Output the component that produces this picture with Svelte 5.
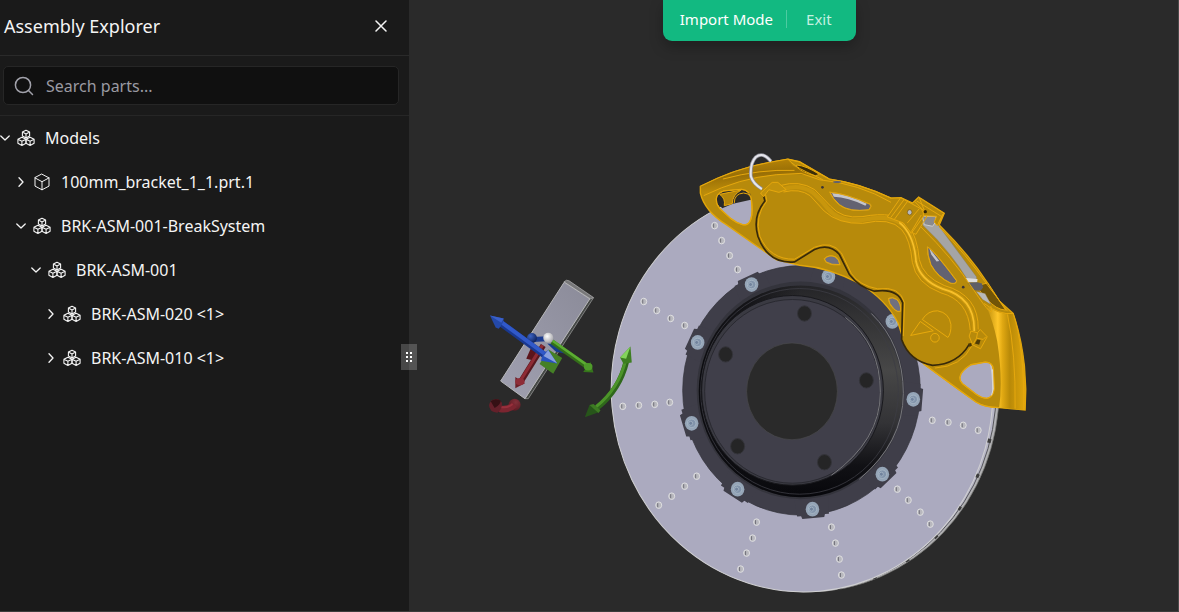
<script>
	const rows = [
		{ level: 0, open: true, icon: 'group', name: 'Models' },
		{ level: 1, open: false, icon: 'part', name: '100mm_bracket_1_1.prt.1' },
		{ level: 1, open: true, icon: 'group', name: 'BRK-ASM-001-BreakSystem' },
		{ level: 2, open: true, icon: 'group', name: 'BRK-ASM-001' },
		{ level: 3, open: false, icon: 'group', name: 'BRK-ASM-020 <1>' },
		{ level: 3, open: false, icon: 'group', name: 'BRK-ASM-010 <1>' },
	];

	const hub = [802, 391];

	const bolts = [
		[752, 285], [829, 277], [893, 322], [914, 400], [883, 475],
		[813, 510], [738, 490], [692, 424], [698, 343],
	];

	const lugs = [[805, 314], [726, 355], [867, 381], [738, 447], [825, 463]];

	const drills = [
		[715, 226], [722, 241], [730, 256], [738, 270],
		[644, 302], [657, 311], [671, 319], [685, 326],
		[623, 407], [639, 406], [655, 405], [670, 403],
		[697, 477], [685, 487], [672, 497], [659, 506],
		[757, 523], [753, 539], [747, 554], [741, 570],
		[832, 528], [836, 544], [840, 560], [842, 576],
		[898, 490], [909, 501], [921, 513], [931, 525],
		[933, 421], [949, 423], [964, 426], [979, 431],
	];

	// angle that turns a lobe so that its top faces away from the hub
	const outward = (x, y) => Math.atan2(y - hub[1], x - hub[0]) * 180 / Math.PI + 90;

	let query = '';
</script>

<div class="app">
	<aside class="explorer">
		<header class="explorer-header">
			<h1>Assembly Explorer</h1>
			<button class="close" aria-label="Close">
				<svg width="12" height="12" viewBox="0 0 12 12"><path d="M1 1l10 10M11 1L1 11" /></svg>
			</button>
		</header>

		<div class="search">
			<label class="search-box">
				<svg width="20" height="20" viewBox="0 0 20 20"><circle cx="9" cy="9" r="7.6" /><path d="M14.5 14.5l4 4" /></svg>
				<input type="text" placeholder="Search parts..." aria-label="Search parts" bind:value={query} />
			</label>
		</div>

		<ul class="tree">
			{#each rows as row}
				<li class="row level-{row.level}">
					<button class="toggle" aria-label="Toggle {row.name}" aria-expanded={row.open}>
						<svg width="10" height="10" viewBox="0 0 10 10">
							<path d={row.open ? 'M.8 3l4.2 4 4.2-4' : 'M3 .8l4 4.2-4 4.2'} />
						</svg>
					</button>
					{#if row.icon === 'part'}
						<svg class="icon" width="18" height="18" viewBox="0 0 18 18">
							<path d="M9 1.2l7 3.7v8.2l-7 3.7-7-3.7V4.9zM2 4.9l7 3.8 7-3.8M9 8.7v8.1" />
						</svg>
					{:else}
						<svg class="icon group" width="18" height="18" viewBox="0 0 18 18">
							<path d="M9 1.2l3.6 1.9v3.9L9 9 5.4 7V3.1zM5.4 3.1L9 5l3.6-1.9M9 5v4" />
							<path d="M4.9 8.3L9 10.3v4l-4.100 2.200-4-2.200v-4zM.9 10.3l4 2 4.100-2M4.9 12.3v4.200" />
							<path d="M13.1 8.3l4 2v4l-4 2.200L9 14.3v-4zM9 10.3l4.100 2 4-2M13.1 12.3v4.200" />
						</svg>
					{/if}
					<span>{row.name}</span>
				</li>
			{/each}
		</ul>

		<button class="resizer" aria-label="Resize panel">
			<svg width="8" height="12" viewBox="0 0 8 12">
				<path d="M1 1h2v2H1zM5 1h2v2H5zM1 5h2v2H1zM5 5h2v2H5zM1 9h2v2H1zM5 9h2v2H5z" />
			</svg>
		</button>
	</aside>

	<main class="viewport">
		<div class="mode">
			<span>Import Mode</span>
			<button>Exit</button>
		</div>

		<svg class="scene" viewBox="409 0 770 612" role="img" aria-label="Brake assembly and bracket">
			<defs>
				<linearGradient id="bell" x1="0" y1="0" x2="0" y2="1">
					<stop offset="0" stop-color="#242427" />
					<stop offset=".12" stop-color="#303032" />
					<stop offset=".4" stop-color="#474747" />
					<stop offset=".65" stop-color="#333336" />
					<stop offset=".85" stop-color="#111115" />
					<stop offset="1" stop-color="#07070b" />
				</linearGradient>
				<linearGradient id="bell-shade" x1="0" x2="1" y1="0" y2="0">
					<stop offset="0" stop-color="#0b0b0f" />
					<stop offset=".25" stop-color="#0b0b0f" stop-opacity=".7" />
					<stop offset=".5" stop-color="#0b0b0f" stop-opacity="0" />
				</linearGradient>
				<linearGradient id="tail" x1="0" x2="1" y1="0" y2="0">
					<stop offset="0" stop-color="#b88a0a" />
					<stop offset=".3" stop-color="#ffc629" />
					<stop offset=".42" stop-color="#e0a812" />
					<stop offset=".6" stop-color="#b98a08" />
					<stop offset="1" stop-color="#e2a70c" />
				</linearGradient>
				<linearGradient id="top-edge" x1="0" x2=".25" y1="0" y2="1">
					<stop offset="0" stop-color="#c28c08" />
					<stop offset=".5" stop-color="#996f06" />
					<stop offset="1" stop-color="#c4930b" />
				</linearGradient>
				<linearGradient id="plate" x1="1" x2="0" y1="0" y2="1">
					<stop offset="0" stop-color="#8b8b99" />
					<stop offset="1" stop-color="#a0a0b0" />
				</linearGradient>
				<radialGradient id="ball-blue" cx=".35" cy=".3" r=".7">
					<stop offset="0" stop-color="#3c63c4" />
					<stop offset="1" stop-color="#10245f" />
				</radialGradient>
				<radialGradient id="ball-white" cx=".4" cy=".35" r=".7">
					<stop offset="0" stop-color="#fff" />
					<stop offset="1" stop-color="#a4a4a8" />
				</radialGradient>
				<radialGradient id="ball-red" cx=".6" cy=".3" r=".8">
					<stop offset="0" stop-color="#84303a" />
					<stop offset="1" stop-color="#541820" />
				</radialGradient>
			</defs>

			<!-- rotor -->
			<ellipse cx="808" cy="391" rx="192" ry="202" fill="#b2b2b4" stroke="#6d6d6a" stroke-width=".7" />
			<ellipse cx="806.5" cy="391" rx="190.5" ry="201" fill="#b7b6c6" stroke="#55555a" stroke-width="1" />
			<ellipse class="vane-gaps" cx="806" cy="391" rx="190" ry="201" />
			<ellipse cx="802.5" cy="391" rx="191" ry="202" fill="#abaabf" stroke="#d0d0d2" transform="rotate(-5 802.5 391)" />
			{#each drills as [x, y]}
				<g class="drill">
					<ellipse cx={x} cy={y} rx="3" ry="3.300" />
					<path d="M{x - 1} {y - 2}v4" />
				</g>
			{/each}

			<!-- hub -->
			<g fill="#3f3e49">
				<ellipse cx={hub[0]} cy={hub[1]} rx="119" ry="125" stroke="#33323a" stroke-width=".7" />
				{#each bolts as [x, y]}
					<path d="M-17 10L-16 -6-12 -6-11 -9 11 -9 12 -6 16 -6 17 10Z" transform="translate({x} {y}) rotate({outward(x, y)})" />
				{/each}
			</g>
			<ellipse cx="801" cy="391" rx="104" ry="109" fill="#34343c" />
			<ellipse cx="801" cy="392" rx="102" ry="106" fill="url(#bell)" />
			<ellipse cx="801" cy="392" rx="102" ry="106" fill="url(#bell-shade)" />
			<ellipse cx="800" cy="392" rx="99" ry="103" fill="none" stroke="#3c3c44" stroke-width=".8" />
			<path class="rim" d="M872 314Q904 345 904 394T860 480" />
			<ellipse cx="793" cy="391" rx="91" ry="95" fill="#3a3a42" stroke="#18181c" />
			<ellipse cx="793" cy="392" rx="88" ry="92" fill="#403f4a" stroke="#292930" />
			<path class="rim" d="M846 318Q881 345 881 393T832 476" />
			{#each lugs as [x, y]}
				<ellipse cx={x} cy={y} rx="7" ry="7.700" fill="#252526" stroke="#34343a" />
			{/each}
			<ellipse cx="792.5" cy="392" rx="45.5" ry="48.5" fill="#2a2a2a" stroke="#4a4a4c" stroke-width=".7" />
			{#each bolts as [x, y]}
				<g class="bolt">
					<ellipse cx={x} cy={y} rx="6.800" ry="7.400" fill="#95a5b7" />
					<circle cx={x} cy={y} r="4.200" fill="#8294ab" />
					<circle cx={x - 1} cy={y} r="2" fill="#71839d" />
				</g>
			{/each}

			<!-- caliper -->
			<g transform="translate(800 140) scale(.33333)">
				<path class="gold" fill-rule="evenodd" d="M-298 140Q-190 85-90 68L-35 58 0 66 50 95 90 118Q180 130 275 175L305 174 340 190 358 172 435 221 420 256Q510 345 565 430L602 486 642 522Q666 590 676 680L680 750 678 812 600 805Q555 804 530 788L375 675 315 610 296 550Q260 480 180 432 90 384 0 377L-70 360-120 325-220 255Q-285 215-298 160ZM-250 178Q-248 160-228 154L-175 149Q-148 150-144 185T-146 238Q-152 259-171 255-190 250-206 237L-238 208Q-250 195-250 178ZM92 158Q140 162 212 194 218 200 208 210 150 218 120 195 98 175 92 158ZM385 323Q400 328 472 424 470 434 455 431 415 412 395 375 384 345 385 323ZM75 358Q88 344 107 352 120 360 121 375 95 377 80 367ZM268 477Q280 472 292 480 305 492 304 514 295 520 282 506 268 492 268 477ZM482 714Q484 695 515 676L558 668Q580 668 582 688L585 748Q582 774 563 777 548 777 530 764L490 733Q481 724 482 714Z" />
				<path d="M92 158Q140 162 212 194 218 200 208 210 150 218 120 195 98 175 92 158ZM385 323Q400 328 472 424 470 434 455 431 415 412 395 375 384 345 385 323Z" fill="#636271" />
				<path d="M75 358Q88 344 107 352 120 360 121 375 95 377 80 367ZM268 477Q280 472 292 480 305 492 304 514 295 520 282 506 268 492 268 477Z" fill="#70707f" class="lip" />
				<path d="M98 160Q150 165 202 192L198 198Q145 172 103 171ZM390 326L420 364 412 366 396 345Z" fill="#c5c5cb" />
				<path class="lip" d="M92 158Q140 162 212 194 218 200 208 210 150 218 120 195 98 175 92 158ZM385 323Q400 328 472 424 470 434 455 431 415 412 395 375 384 345 385 323Z" />

				<path d="M-298 140Q-190 85-90 68L-35 58-20 78 50 110Q0 100-60 104T-200 132L-285 165Z" fill="url(#top-edge)" />
				<path class="lip" d="M-298 140Q-190 85-90 68L-35 58 0 66 50 95 90 118Q180 130 275 175M-288 168Q-180 115-70 105L5 101 60 120Q180 132 275 188M-230 118Q-120 88-15 92" />
				<path d="M-8 76Q20 78 60 104L48 108Q5 98-10 80Z" fill="#3b2d08" class="lip" />
				<path class="lip" d="M-35 58Q-18 78 20 96L70 120" />

				<!-- strut behind the left window -->
				<path d="M-248 190L-246 168-228 156-175 151-148 162-146 180-200 192-232 206Z" fill="#2a2a28" />
				<path d="M-240 164L-175 151Q-202 166-202 192L-226 198Q-222 176-240 164Z" fill="#b4860a" class="lip" />
				<path class="lip" d="M-196 190Q-196 162-168 160-152 160-147 172" />

				<!-- tail -->
				<path d="M560 498Q600 527 642 522 666 590 676 680L680 750 678 812 600 805Q612 720 594 605 582 545 560 498Z" fill="url(#tail)" />
				<path class="lip" d="M555 492Q600 527 642 522M642 522Q676 620 674 812M625 525Q650 640 648 808" />
				<path d="M565 430L602 486 620 512Q590 510 565 480L530 440Z" fill="#715407" class="lip" />

				<!-- bridge -->
				<path d="M370 245L412 250 532 412 530 430 508 425Q450 330 370 256Z" fill="#a5a5a5" stroke="#777" />
				<path d="M530 455L558 462 576 496 550 480Z" fill="#b9b9ba" stroke="#80651a" />
				<path d="M369 229L410 231 410 246 400 260 375 255Z" fill="#8a8a8d" stroke="#ccc" stroke-width="3" />
				<path d="M500 415L535 418 534 428 506 428Z" fill="#dcdcdc" />
				<path d="M505 430L535 428 548 432 552 444 544 454 524 452Z" fill="#5e5e66" />
				<path class="lip" d="M365 262Q460 355 524 452T575 500M420 262Q505 350 560 430L625 515" />

				<!-- body -->
				<path d="M-110 160L-88 130-68 128-48 148Q30 135 68 188 105 245 180 242 270 222 305 258 340 290 344 360 358 428 430 455 525 478 527 575L510 615Q470 675 400 678 330 665 307 600 318 540 310 490 295 450 240 450 180 444 150 405L120 345Q85 310 45 337L0 367Q-90 375-125 290-145 215-104 184Z" fill="#b78a0b" />
				<path class="seam" d="M-110 160L-104 184Q-142 230-125 290-95 374-15 367L45 330Q90 310 120 345L150 405Q180 444 225 455 295 445 310 490L307 600Q330 665 400 678 475 675 510 615" />
				<path class="lip" d="M-102 164L-98 184Q-136 230-119 290-89 360-15 359L45 323Q96 302 126 340L156 402Q180 438 235 448 302 438 316 490L312 590M407 686Q487 682 518 619" />
				<path class="tube" d="M-50 149Q0 132 40 158 65 180 85 206 120 250 190 241 280 222 315 260 345 292 350 365 362 422 430 448 528 474 525 575" />
				<path class="tube light" d="M300 248Q345 285 350 365 362 422 430 448 528 474 525 575" />
				<path class="lip" d="M-48 157Q0 145 32 168L74 214Q117 254 190 251 273 232 307 270 333 300 339 368 350 432 425 460 507 482 513 572M-60 138Q0 120 46 150L94 200Q127 238 188 231 290 212 325 254 354 290 360 360 371 411 435 438 540 467 537 570" />

				<!-- mounts -->
				<path d="M-117 160L-82 128-65 128-40 150-62 158-92 150-108 171Z" fill="#c2920c" class="lip" />
				<path d="M264 232L304 174 366 208 376 225 336 281 312 250Z" fill="#b78a0b" class="lip" />
				<path class="lip" d="M274 234L314 180M286 238L324 186M324 250L360 207M336 276L366 226M342 281L350 284 382 232 380 222" />
				<path d="M346 185L358 173 434 221 414 258 405 247 412 230 372 228 372 212Z" fill="#b78a0b" class="lip" />
				<path class="lip" d="M352 184L426 230M418 250L430 224M360 174L378 220" />
				<ellipse cx="331" cy="218" rx="7" ry="8" fill="#b8b8be" stroke="#755608" stroke-width="2" />
				<circle cx="378" cy="216" r="5" fill="#302507" />
				<path d="M515 575L535 580 543 570 564 592 544 628 520 616 510 590Z" fill="#b78a0b" class="lip" />
				<path class="lip" d="M535 580L532 596 552 600 560 592M532 596L522 614" />
				<path d="M527 612L534 600 544 602 540 616ZM507 612L516 611 518 620 510 622Z" fill="#4d3a06" />
				<circle cx="69" cy="143" r="4" fill="#3d3535" />
				<circle cx="492" cy="443" r="4" fill="#3d3535" />
				<ellipse cx="113" cy="127" rx="12" ry="3" fill="#62616c" />

				<path class="lip" d="M375 675Q460 740 530 788 555 804 600 805M482 714Q484 695 515 676L558 668Q580 668 582 688L585 748Q582 774 563 777 548 777 530 764L490 733Q481 724 482 714ZM-250 178Q-248 160-228 154L-175 149Q-148 150-144 185T-146 238Q-152 259-171 255-190 250-206 237L-238 208Q-250 195-250 178Z" />
				<path d="M580 690L582 750 577 768" fill="none" stroke="#ddd" stroke-width="3" />

				<!-- maker's mark -->
				<g class="mark">
					<path d="M369 540Q386 513 415 514 450 520 455 555 456 582 446 594ZM363 546L402 574 334 588Z" />
					<circle cx="407" cy="595" r="13" />
				</g>

				<!-- hose -->
				<path class="hose" d="M-86 65Q-110 35-131 52-149 70-146 110-140 132-113 148" />
				<path class="hose light" d="M-86 65Q-110 35-131 52-149 70-146 110-140 132-113 148" />
			</g>

			<!-- bracket and gizmo -->
			<g transform="translate(470 260) scale(.33333)">
				<path d="M360 113L371 115 175 418 165 418Z" fill="#454846" stroke="#a5a5a5" stroke-width="2" />
				<path d="M282 67L290 62 298 64 371 114 362 118Z" fill="#777779" stroke="#b5b5b5" stroke-width="2" />
				<path d="M283 68L360 118 165 418 92 365Z" fill="url(#plate)" stroke="#b8b8ba" stroke-width="3" />

				<path d="M182 268L212 272 194 304 169 298Z" fill="#5c151b" />
				<path d="M232 252L264 256 284 282 258 277Z" fill="#173b8d" />
				<path d="M220 258L152 368" stroke="#58181f" stroke-width="17" />
				<path d="M218 257L150 366" stroke="#8e2b35" stroke-width="9" />
				<path d="M136 353L165 372 136 387Z" fill="#6d2028" />
				<ellipse cx="150" cy="367" rx="14" ry="11" fill="#8e2d38" />
				<path d="M236 270L277 296 250 343 209 314Z" fill="#458026" />

				<path d="M246 247L351 321" stroke="#346e19" stroke-width="15" />
				<path d="M248 244L353 318" stroke="#5cad32" stroke-width="8" />
				<path d="M362 308L371 339 340 338Z" fill="#35751b" />
				<ellipse cx="355" cy="322" rx="13" ry="11" fill="#4f9b2a" />

				<path d="M188 240L232 238" stroke="#1c3c91" stroke-width="15" />
				<circle cx="186" cy="236" r="15" fill="url(#ball-blue)" />
				<path d="M92 191L228 290" stroke="#19388f" stroke-width="20" stroke-linecap="round" />
				<path d="M94 188L230 287" stroke="#3159c9" stroke-width="12" stroke-linecap="round" />
				<path d="M60 168L101 177Q102 190 86 208L77 204Z" fill="#2449a9" />
				<path d="M60 168L101 177 94 190Z" fill="#3a60ca" />
				<path d="M235 272L262 312 213 304Q216 284 235 272Z" fill="#2852bd" />
				<path d="M235 272L262 312 221 290Z" fill="#88a0df" />
				<circle cx="235" cy="235" r="15" fill="url(#ball-white)" />

				<circle cx="134" cy="436" r="18" fill="url(#ball-red)" />
				<path d="M88 448Q116 454 134 436" fill="none" stroke="#7c2530" stroke-width="20" />
				<path d="M92 443Q114 447 128 434" fill="none" stroke="#98303c" stroke-width="6" />
				<path d="M84 419Q62 416 57 438 59 460 82 460 97 450 96 430Z" fill="#64202a" />
				<path d="M62 426Q76 415 92 424 92 436 74 446Z" fill="#351014" />

				<path d="M470 305Q450 390 382 445" fill="none" stroke="#2f681b" stroke-width="17" />
				<path d="M467 305Q446 388 379 442" fill="none" stroke="#4c9429" stroke-width="9" />
				<path d="M482 261L451 294 461 313 486 309Z" fill="#3d7e21" />
				<path d="M482 261L451 294 469 298Z" fill="#83d45b" />
				<path d="M345 474L359 437 391 457Z" fill="#27551a" />
				<path d="M359 437L371 434 392 453 386 461Z" fill="#3d7b23" />
			</g>
		</svg>
	</main>
</div>

<style>
	:global(body) {
		margin: 0;
		background: #1a1a1a;
	}

	.app {
		display: flex;
		height: 100vh;
		box-sizing: border-box;
		overflow: hidden;
		border-right: 1px solid #4a4a4a;
		border-bottom: 1px solid #3c3c3c;
		font-family: "Segoe UI", "Noto Sans", sans-serif;
		font-size: 16px;
		line-height: 24px;
		color: #f4f4f4;
		background: #2a2a2a;
	}

	button {
		padding: 0;
		border: 0;
		background: none;
		color: inherit;
		font: inherit;
		cursor: pointer;
	}

	svg {
		display: block;
		flex: none;
	}

	.explorer {
		position: relative;
		flex: none;
		width: 409px;
		background: #1a1a1a;
	}

	.explorer-header {
		display: flex;
		justify-content: space-between;
		align-items: center;
		height: 56px;
		padding: 0 22px 3px 4px;
		box-sizing: border-box;
		border-bottom: 1px solid #2a2a2a;
	}

	h1 {
		margin: 0;
		font-size: 18px;
		line-height: 28px;
		font-weight: 400;
	}

	.close svg,
	.toggle svg,
	.icon {
		fill: none;
		stroke: currentColor;
		stroke-linecap: round;
		stroke-linejoin: round;
	}

	.close svg {
		stroke-width: 1.5;
	}

	.search {
		padding: 10px 10px 10px 3px;
		border-bottom: 1px solid #262626;
	}

	.search-box {
		display: flex;
		align-items: center;
		gap: 12px;
		height: 37px;
		padding: 0 10px;
		border: 1px solid #262626;
		border-radius: 5px;
		background: #101010;
	}

	.search-box svg {
		fill: none;
		stroke: #a1a1aa;
		stroke-width: 1.5;
		stroke-linecap: round;
	}

	input {
		flex: 1;
		min-width: 0;
		padding: 0;
		border: 0;
		outline: none;
		background: none;
		color: inherit;
		font: inherit;
	}

	input::placeholder {
		color: #9a9aa2;
		opacity: 1;
	}

	.tree {
		margin: 0;
		padding: 0;
		list-style: none;
	}

	.row {
		display: flex;
		align-items: center;
		height: 44px;
		white-space: nowrap;
	}

	.level-1 {
		padding-left: 16px;
	}

	.level-2 {
		padding-left: 31px;
	}

	.level-3 {
		padding-left: 46px;
	}

	.icon {
		margin: 0 10px 0 7px;
	}

	.icon.group {
		stroke-width: 1.1;
	}

	.toggle svg {
		stroke-width: 1.3;
	}

	.resizer {
		position: absolute;
		top: 344px;
		right: -8px;
		z-index: 1;
		display: grid;
		place-items: center;
		width: 16px;
		height: 26px;
		background: rgba(255, 255, 255, 0.2);
	}

	.resizer svg {
		fill: #fff;
	}

	.viewport {
		position: relative;
		flex: 1;
		min-width: 0;
		background: #2a2a2a;
	}

	.scene {
		width: 100%;
		height: 100%;
	}

	.mode {
		position: absolute;
		top: 0;
		left: 33%;
		display: flex;
		align-items: center;
		height: 41px;
		padding: 0 24px 4px 17px;
		box-sizing: border-box;
		border-radius: 0 0 9px 9px;
		background: #12b981;
		box-shadow: 0 6px 14px rgba(0, 0, 0, 0.25);
		color: #fff;
		font-size: 15px;
	}

	.mode button {
		margin-left: 13px;
		padding-left: 19px;
		border-left: 1px solid #4dcba1;
		line-height: 18px;
		color: #c5f0e0;
	}

	.vane-gaps {
		fill: none;
		stroke: #3c3c3c;
		stroke-width: 4;
		stroke-dasharray: 4 33;
		stroke-dashoffset: -12;
	}

	.drill ellipse {
		fill: #b8b8be;
		stroke: #dedee0;
		stroke-width: 1;
	}

	.drill path {
		stroke: #707078;
		stroke-width: 1;
	}

	.bolt circle {
		stroke: #b4c2cf;
		stroke-width: 0.6;
	}

	.rim {
		fill: none;
		stroke: #77777b;
		stroke-width: 1;
	}

	.gold {
		fill: #b78a0b;
		stroke: #e2a60a;
		stroke-width: 4;
	}

	.lip {
		stroke: #e6a80d;
		stroke-width: 3;
		stroke-linejoin: round;
	}

	path.lip:not([fill]) {
		fill: none;
	}

	.seam {
		fill: none;
		stroke: #37290a;
		stroke-width: 5;
	}

	.tube {
		fill: none;
		stroke: #c8960c;
		stroke-width: 13;
	}

	.tube.light {
		stroke: #f8c02a;
		stroke-width: 5;
	}

	.mark {
		fill: none;
		stroke: #e8aa0c;
		stroke-width: 3;
	}

	.hose {
		fill: none;
		stroke: #8e8e98;
		stroke-width: 11;
	}

	.hose.light {
		stroke: #e6e6ec;
		stroke-width: 6;
	}
</style>
